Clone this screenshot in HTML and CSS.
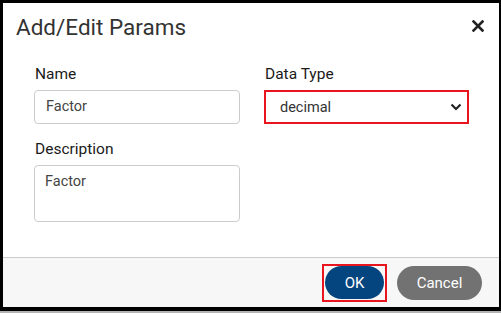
FILE: index.html
```html
<!DOCTYPE html>
<html lang="en">
<head>
  <meta charset="UTF-8" />
  <title>Add/Edit Params</title>
  <link rel="stylesheet" href="styles.css">
</head>
<body>
  <div class="dialog">
    <div class="dialog-header">
      <div class="dialog-title">Add/Edit Params</div>
      <button class="close-btn" title="Close">
        <svg width="12" height="12" viewBox="0 0 12 12"><path d="M1.5 1.5 L10.5 10.5 M10.5 1.5 L1.5 10.5" stroke="#222" stroke-width="2.6" stroke-linecap="square"/></svg>
      </button>
    </div>

    <div class="dialog-body">
      <div class="field-grid">
        <div class="field">
          <label>Name</label>
          <div class="input">Factor</div>
        </div>
        <div class="field">
          <label>Data Type</label>
          <div class="select highlight">
            <span>decimal</span>
            <svg width="12" height="8" viewBox="0 0 12 8"><path d="M1.5 1.5 L6 6 L10.5 1.5" fill="none" stroke="#222" stroke-width="2.2"/></svg>
          </div>
        </div>
        <div class="field">
          <label>Description</label>
          <div class="input textarea">Factor</div>
        </div>
      </div>
    </div>

    <div class="dialog-footer">
      <span class="mark"><button class="btn btn-primary">OK</button></span>
      <button class="btn btn-secondary">Cancel</button>
    </div>
  </div>
</body>
</html>
```

FILE: styles.css
```css
html, body {
  margin: 0;
  padding: 0;
}
body {
  background-color: #b4b4b4;
  font-family: Roboto, "Liberation Sans", sans-serif;
  width: 501px;
  height: 313px;
  overflow: hidden;
}
.dialog {
  box-sizing: border-box;
  width: 501px;
  height: 311px;
  background: #fff;
  border-style: solid;
  border-color: #000;
  border-width: 3px 2px 4px 3px;
  display: flex;
  flex-direction: column;
}
.dialog-header {
  display: flex;
  align-items: center;
  justify-content: space-between;
  padding: 10px 15px 0 13px;
}
.dialog-title {
  font-size: 22.5px;
  color: #333;
  line-height: 28px;
}
.close-btn {
  background: none;
  border: none;
  padding: 0;
  margin-top: -2px;
  display: flex;
  cursor: pointer;
}
.dialog-body {
  flex: 1;
  padding: 24px 30px 0 31px;
}
.field-grid {
  display: grid;
  grid-template-columns: 206px 205px;
  column-gap: 24px;
  row-gap: 16px;
}
.field label {
  display: block;
  font-size: 15.5px;
  color: #1a1a1a;
  line-height: 19px;
  margin-bottom: 6px;
  padding-left: 1px;
}
.input {
  box-sizing: border-box;
  height: 34px;
  border: 1px solid #ccc;
  border-radius: 4px;
  padding: 0 11px;
  font-size: 14.5px;
  color: #444;
  line-height: 32px;
}
.textarea {
  height: 57px;
  line-height: 18px;
  padding-top: 7px;
  padding-left: 10px;
}
.select {
  box-sizing: border-box;
  height: 34px;
  border: 1px solid #ccc;
  display: flex;
  align-items: center;
  justify-content: space-between;
  padding: 0 5px 0 14px;
  font-size: 14.5px;
  color: #333;
}
.select.highlight {
  border: 2px solid #e8151f;
}
.dialog-footer {
  border-top: 1px solid #c8cccc;
  background: #f8f7f7;
  height: 49px;
  display: flex;
  align-items: center;
  justify-content: flex-end;
  gap: 10px;
  padding: 0 17px 0 0;
}
.mark {
  display: flex;
  align-items: center;
  height: 38px;
  box-sizing: border-box;
  border: 2px solid #e8151f;
  padding: 0 1px;
}
.btn {
  height: 34px;
  border: none;
  border-radius: 17px;
  color: #fff;
  font-family: Roboto, "Liberation Sans", sans-serif;
  font-size: 15px;
  padding: 0;
  cursor: pointer;
}
.btn-primary {
  width: 59px;
  height: 33px;
  background: #05457f;
}
.btn-secondary {
  width: 85px;
  background: #727272;
}
```
